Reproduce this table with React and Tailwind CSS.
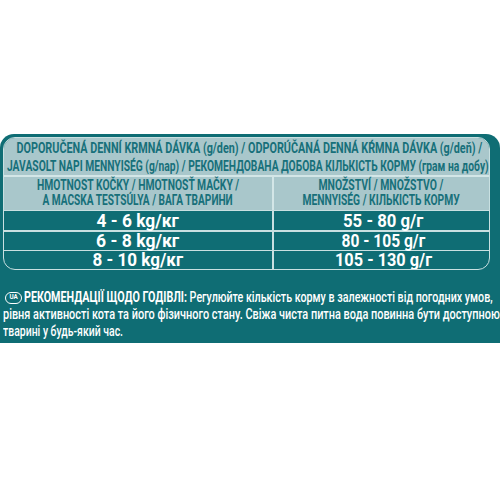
import { useLayoutEffect, useRef, useState } from "react";

function Fit({ children, w, origin = "center", className = "" }) {
  const ref = useRef(null);
  const [s, setS] = useState(1);
  useLayoutEffect(() => {
    const el = ref.current;
    if (el && el.offsetWidth) setS(w / el.offsetWidth);
  }, [w]);
  return (
    <span
      ref={ref}
      className={"inline-block shrink-0 whitespace-nowrap " + className}
      style={{ transform: `scaleX(${s})`, transformOrigin: origin }}
    >
      {children}
    </span>
  );
}

export default function App() {
  const font = { fontFamily: 'Roboto, "Liberation Sans", sans-serif' };
  const rows = [
    ["4 - 6 kg/кг", 82, "55 - 80 g/г", 80, "h-[19px]"],
    ["6 - 8 kg/кг", 83, "80 - 105 g/г", 84, "h-[18px]"],
    ["8 - 10 kg/кг", 91, "105 - 130 g/г", 97, "h-[18px]"],
  ];
  return (
    <div className="w-[500px] h-[500px] bg-white overflow-hidden" style={font}>
      <div className="h-[134px]" />
      <div className="bg-[#0f6d74] rounded-t-[14px] w-[500px] pt-[3px] pb-[3px]">
        <div className="ml-[3px] w-[487px] rounded-[12px] overflow-hidden border-[1.5px] border-[#c9e0e1] bg-[#0f6d74]">
          <div className="bg-[#a9c7cb] h-[37px] flex flex-col items-center justify-center text-[#17707a] font-bold text-[15px] leading-[18px]">
            <div className="flex justify-center w-full pl-[6px]">
              <Fit w={466}>DOPORUČENÁ DENNÍ KRMNÁ DÁVKA (g/den) / ODPORÚČANÁ DENNÁ KŔMNA DÁVKA (g/deň) /</Fit>
            </div>
            <div className="flex justify-center w-full pl-[2px]">
              <Fit w={482}>JAVASOLT NAPI MENNYISÉG (g/nap) / РЕКОМЕНДОВАНА ДОБОВА КІЛЬКІСТЬ КОРМУ (грам на добу)</Fit>
            </div>
          </div>
          <div className="h-[1.5px] bg-[#d3e6e7]" />
          <div className="bg-[#a9c7cb] h-[33px] flex text-[#17707a] font-bold text-[14px] leading-[15px]">
            <div className="w-[268px] flex flex-col items-center justify-center">
              <Fit w={202}>HMOTNOST KOČKY / HMOTNOSŤ MAČKY /</Fit>
              <Fit w={190}>A MACSKA TESTSÚLYA / ВАГА ТВАРИНИ</Fit>
            </div>
            <div className="w-[1.5px] bg-[#d3e6e7]" />
            <div className="flex-1 flex flex-col items-center justify-center">
              <Fit w={125}>MNOŽSTVÍ / MNOŽSTVO /</Fit>
              <Fit w={157}>MENNYISÉG / КІЛЬКІСТЬ КОРМУ</Fit>
            </div>
          </div>
          {rows.map((r, i) => (
            <div key={i}>
              <div className="h-[1.5px] bg-[#c9e0e1]" />
              <div className={`flex text-white font-bold text-[18px] leading-[18px] ${r[4]}`}>
                <div className="w-[268px] flex items-center justify-center">
                  <Fit w={r[1]}>{r[0]}</Fit>
                </div>
                <div className="w-[1.5px] bg-[#c9e0e1]" />
                <div className="flex-1 flex items-center justify-center pl-[4px]">
                  <Fit w={r[3]}>{r[2]}</Fit>
                </div>
              </div>
            </div>
          ))}
        </div>
        <div className="mt-[19px] text-white text-[15px] leading-[17px] font-medium w-[500px] overflow-hidden">
          <div className="flex items-center pl-[5px]">
            <span className="inline-flex items-center justify-center shrink-0 w-[17px] h-[12px] rounded-full border-[1.3px] border-white text-[7px] font-bold leading-none mr-[2px]">
              <span className="scale-x-90">UA</span>
            </span>
            <Fit w={469} origin="left">
              <span className="font-bold">РЕКОМЕНДАЦІЇ ЩОДО ГОДІВЛІ:</span> Регулюйте кількість корму в залежності від погодних умов,
            </Fit>
          </div>
          <div className="pl-[3px] flex">
            <Fit w={497} origin="left">рівня активності кота та його фізичного стану. Свіжа чиста питна вода повинна бути доступною</Fit>
          </div>
          <div className="pl-[3px] flex">
            <Fit w={120} origin="left">тварині у будь-який час.</Fit>
          </div>
        </div>
      </div>
    </div>
  );
}
